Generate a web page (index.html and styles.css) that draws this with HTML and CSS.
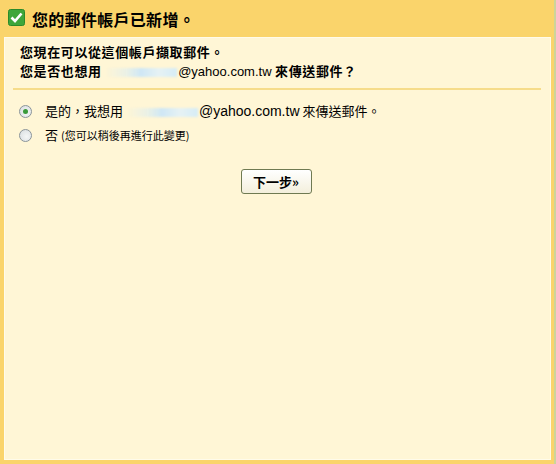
FILE: index.html
```html
<!DOCTYPE html>
<html lang="zh-Hant">
<head>
    <meta charset="UTF-8">
    <meta name="viewport" content="width=device-width, initial-scale=1.0">
    <title>郵件帳戶已新增</title>
    <link rel="stylesheet" href="styles.css">
</head>
<body>
    <div class="frame">
        <div class="header">
            <svg class="check" width="17" height="17" viewBox="0 0 17 17">
                <rect x="0.5" y="0.5" width="16" height="16" rx="2" fill="#3ea63a" stroke="#2b8a2a"/>
                <path d="M3.5 8.5 L7 12 L13.5 4.5" fill="none" stroke="#fff" stroke-width="2.6"/>
            </svg>
            <h1>您的郵件帳戶已新增。</h1>
        </div>
        <div class="panel">
            <p class="intro">
                您現在可以從這個帳戶擷取郵件。<br>
                您是否也想用 <span class="blur"></span><span class="addr">@yahoo.com.tw</span> 來傳送郵件？
            </p>
            <div class="divider"></div>
            <div class="options">
                <label class="option">
                    <input type="radio" name="send" checked>
                    <span>是的，我想用 <span class="blur"></span><span class="addr">@yahoo.com.tw</span> 來傳送郵件。</span>
                </label>
                <label class="option">
                    <input type="radio" name="send">
                    <span>否 <small>(您可以稍後再進行此變更)</small></span>
                </label>
            </div>
            <div class="actions">
                <button>下一步»</button>
            </div>
        </div>
    </div>
</body>
</html>
```

FILE: styles.css
```css
body {
    margin: 0;
    background: #fad46b;
    font-family: "Noto Sans CJK TC", "Liberation Sans", sans-serif;
    color: #000;
}
.frame {
    width: 554px;
    height: 464px;
    border-right: 2px solid #cdd49a;
    display: flex;
    flex-direction: column;
}
.header {
    height: 37px;
    display: flex;
    align-items: center;
    padding-left: 8px;
    gap: 7px;
}
.check {
    margin-top: -3px;
}
h1 {
    margin: 0;
    font-size: 16px;
    font-weight: bold;
    letter-spacing: 0.3px;
}
.panel {
    margin: 0 3px 4px 4px;
    flex: 1;
    background: #fff6d6;
    border: 1px solid #fffbea;
    padding: 4px 8px 0 15px;
}
.intro {
    margin: 0;
    font-size: 13px;
    font-weight: bold;
    line-height: 19px;
    letter-spacing: 0.6px;
}
.addr {
    font-family: "Liberation Sans", Arial, sans-serif;
    font-weight: normal;
    letter-spacing: 0;
}
.option .addr {
    font-size: 14px;
}
.blur {
    display: inline-block;
    width: 72px;
    height: 9px;
    margin-right: 1px;
    background: linear-gradient(90deg, rgba(220, 238, 246, 0) 0%, rgba(214, 236, 246, 0.5) 30%, #cfe7f5 50%, #e6f2f4 75%, #d6ecf6 100%);
    filter: blur(1px);
    vertical-align: -1px;
}
.divider {
    height: 2px;
    background: #f6dc8a;
    margin: 7px 1px 0 -7px;
}
.options {
    margin-top: 11px;
    display: flex;
    flex-direction: column;
    gap: 4px;
}
.option {
    display: flex;
    align-items: center;
    gap: 13px;
    font-size: 13px;
    line-height: 19px;
}
.option small {
    font-size: 11px;
}
input[type=radio] {
    appearance: none;
    margin: 0 0 0 -1px;
    width: 13px;
    height: 13px;
    border: 1px solid #8a949a;
    border-radius: 50%;
    background: radial-gradient(circle at 60% 60%, #f4f6f6, #d7dcdf);
    position: relative;
}
input[type=radio]:checked::after {
    content: "";
    position: absolute;
    left: 3px;
    top: 3px;
    width: 5px;
    height: 5px;
    border-radius: 50%;
    background: #3a9a3a;
}
.actions {
    display: flex;
    justify-content: center;
    margin-top: 24px;
    padding-right: 10px;
}
button {
    width: 71px;
    height: 25px;
    font-family: "Noto Sans CJK TC", sans-serif;
    font-size: 13px;
    font-weight: bold;
    border: 1px solid #6f7a52;
    border-radius: 3px;
    background: linear-gradient(#ffffff, #f3efdc);
    padding: 0;
    cursor: pointer;
}
```
